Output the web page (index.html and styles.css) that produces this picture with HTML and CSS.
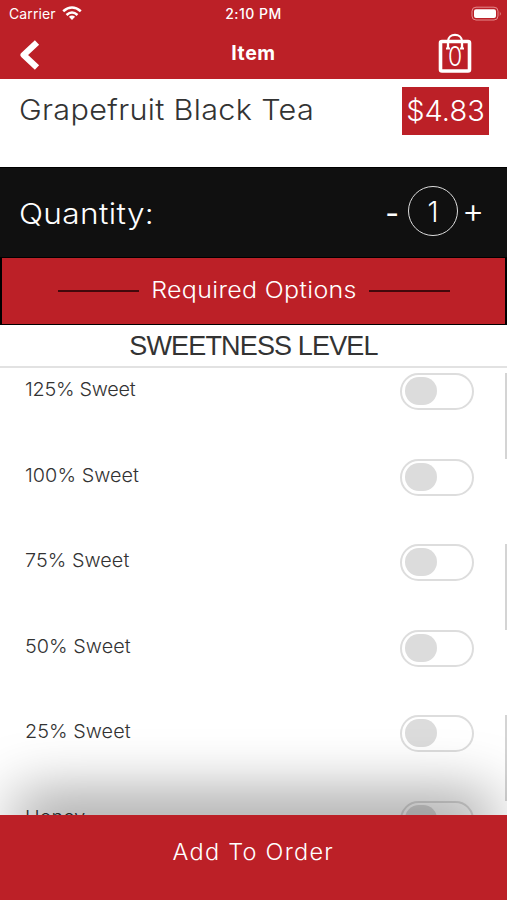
FILE: index.html
```html
<!DOCTYPE html>
<html lang="en">
<head>
<meta charset="utf-8" />
<title>Item</title>
<link rel="stylesheet" href="styles.css">
</head>

<body>
<div class="page">
	<div class="header">
		<div class="status">
			<div class="carrier"><span>Carrier</span>
				<svg width="20" height="15" viewBox="0 0 20 15" fill="none" stroke="#fff" stroke-width="2.6"><path d="M1.2 5.3Q10-2.3 18.8 5.3M4.5 8.9Q10 4.1 15.5 8.9"/><path d="M6.9 10.8Q10 8.3 13.1 10.8L10 14Z" fill="#fff" stroke="none"/></svg>
			</div>
			<div class="time">2:10 PM</div>
			<svg class="battery" width="32" height="16" viewBox="0 0 32 16"><rect x="1" y="1.2" width="26" height="12.8" rx="4" fill="none" stroke="#e58a8d"/><rect x="3" y="3.2" width="22" height="8.8" rx="2" fill="#fff"/><path d="M28.8 5.3Q30.6 7.6 28.8 9.9Z" fill="#e58a8d"/></svg>
		</div>
		<div class="nav">
			<svg class="back" width="20" height="32" viewBox="0 0 20 32"><path d="M17 3.5L3.6 16L17 28.5" fill="none" stroke="#fff" stroke-width="6.2" stroke-linejoin="round"/></svg>
			<div class="navTit">Item</div>
			<div class="bag">
				<svg width="34" height="40" viewBox="0 0 34 40" fill="none" stroke="#fff"><rect x="2.5" y="8.5" width="29" height="29.5" rx="1.5" stroke-width="3.6"/><path d="M10 16V8.5C10-.3 24-.3 24 8.5V16" stroke-width="2.3"/><path d="M8 15.5H12M22 15.5H26" stroke-width="2"/></svg>
				<span>0</span>
			</div>
		</div>
	</div>

	<div class="product">
		<div class="name">Grapefruit Black Tea</div>
		<div class="price">$4.83</div>
	</div>

	<div class="quantity">
		<div class="qLabel">Quantity:</div>
		<div class="counter">
			<span class="minus">-</span>
			<span class="num">1</span>
			<span class="plus">+</span>
		</div>
	</div>

	<div class="required">
		<i></i><span>Required Options</span><i></i>
	</div>
	<div class="group">SWEETNESS LEVEL</div>

	<ul class="options">
		<li class="bar"><span class="narrow">125% Sweet</span><b class="toggle"></b></li>
		<li><span>100% Sweet</span><b class="toggle"></b></li>
		<li class="bar"><span>75% Sweet</span><b class="toggle"></b></li>
		<li><span>50% Sweet</span><b class="toggle"></b></li>
		<li class="bar"><span>25% Sweet</span><b class="toggle"></b></li>
		<li><span>Honey</span><b class="toggle"></b></li>
	</ul>

	<div class="addBtn"><span>Add To Order</span></div>
</div>
</body>
</html>
```
FILE: styles.css
```css
*{ padding:0; margin:0; box-sizing:border-box;}

body{ background:#fff; font-family:Inter,"Liberation Sans",sans-serif; font-weight:300; color:#333;}
.page{ width:507px; height:900px; overflow:hidden; display:flex; flex-direction:column;}
svg{ display:block;}

.header{ height:79px; background:#bc2027; color:#fff; flex:none;}
.status{ height:27px; display:grid; grid-template-columns:1fr auto 1fr; align-items:center; padding:0 4px 0 9px; font-size:14px; font-weight:400;}
.carrier{ display:flex; align-items:center; gap:6px;}
.carrier span{ letter-spacing:0.1px;}
.time{ font-weight:500; letter-spacing:0.5px; padding-right:5px;}
.battery{ justify-self:end;}
.nav{ height:52px; display:grid; grid-template-columns:1fr auto 1fr; align-items:center; padding:0 35px 0 20px;}
.back{ margin-top:3px;}
.navTit{ font-size:19.5px; font-weight:700; letter-spacing:0.6px; padding-left:15px;}
.bag{ justify-self:end; position:relative; width:34px; height:40px;}
.bag span{ position:absolute; left:0; top:10px; width:34px; text-align:center; font-size:27px; line-height:27px; transform:scaleX(0.85);}

.product{ height:88px; display:flex; justify-content:space-between; align-items:flex-start; padding:8px 18px 0 19px; flex:none;}
.name{ font-size:28.5px; line-height:46px; letter-spacing:0.3px; white-space:nowrap; transform:scaleX(1.073); transform-origin:left;}
.price{ width:87px; height:48px; line-height:48px; background:#bc2027; color:#fff; font-size:29px; text-align:center;}

.quantity{ height:90px; background:#101010; color:#fff; display:flex; justify-content:space-between; align-items:center; padding:0 24px 0 19px; border-top:1px solid #000; flex:none;}
.qLabel{ font-size:28.5px; letter-spacing:0.3px; padding-top:1px; transform:scaleX(1.11); transform-origin:left;}
.counter{ display:flex; align-items:center; font-size:30px;}
.num{ width:50px; height:50px; line-height:51px; border:1.5px solid #ddd; border-radius:50%; text-align:center; margin:0 5px 3px 9px; font-size:28px;}
.minus{ font-weight:400;}
.plus{ width:20px; font-size:34px; line-height:36px; display:flex; justify-content:center; margin-bottom:3px;}

.required{ height:68px; background:#bc2027; color:#fff; border:solid #000; border-width:1px 2px; display:flex; justify-content:center; align-items:center; font-size:22.5px; flex:none;}
.required span{ width:230px; text-align:center; letter-spacing:0.3px; margin-top:-3px; transform:scaleX(1.11);}
.required i{ width:81px; height:2px; background:#42080b;}
.group{ height:43px; line-height:42px; border-bottom:2px solid #e2e2e2; font-family:"Liberation Sans",Arial,sans-serif; font-weight:400; font-size:27px; letter-spacing:-0.85px; text-align:center; flex:none;}

.options{ list-style:none; flex:1; min-height:0; overflow:hidden; padding-top:5px;}
.options li{ height:85.5px; display:flex; justify-content:space-between; align-items:flex-start; padding:0 33px 0 25px; position:relative;}
.options span{ font-size:19px; line-height:33px; letter-spacing:0.05px; transform:scaleX(1.042); transform-origin:left;}
.options .narrow{ letter-spacing:-0.25px;}
.toggle{ width:74px; height:37px; border:2.5px solid #ddd; border-radius:19px; padding:2px 3px; background:#fff;}
.toggle:before{ content:""; display:block; width:32px; height:28px; border-radius:14px; background:#dcdcdc;}
.options .bar:after{ content:""; position:absolute; right:0; top:0; width:2px; height:86px; background:#d4d4d4;}

.addBtn{ height:85px; background:#bc2027; color:#fff; text-align:center; font-size:22.5px; line-height:74px; letter-spacing:1.2px; position:relative; flex:none; box-shadow:0 -35px 60px -15px rgba(0,0,0,0.4);}
.addBtn span{ display:inline-block; transform:scaleX(1.045);}
```
